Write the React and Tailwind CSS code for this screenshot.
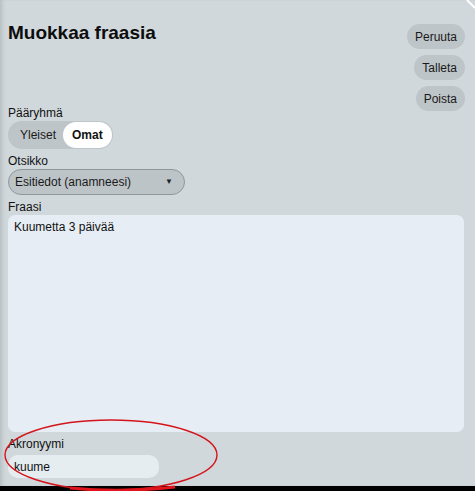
import React from 'react';

function PillButton({ children }) {
  return (
    <button className="h-[25px] px-2 rounded-full bg-[#bec5c9] text-[12px] leading-[14px] text-[#1a1a1a]">
      {children}
    </button>
  );
}

function Label({ children, className = '' }) {
  return <div className={`text-[12px] leading-[14px] text-[#111] ${className}`}>{children}</div>;
}

export default function App() {
  return (
    <div
      className="relative w-[475px] h-[491px] flex flex-col overflow-hidden bg-[#d0d8dc]"
      style={{ fontFamily: '"Liberation Sans", Arial, sans-serif' }}
    >
      <div className="flex-1 flex flex-col pt-[22px] pl-[8px] pr-[10px] shadow-[inset_4px_0_4px_-2px_rgba(0,0,0,0.13)]">
        {/* header */}
        <div className="flex justify-between items-start h-[84px]">
          <h1 className="text-[19px] leading-[22px] font-bold text-[#0d0d0d]">Muokkaa fraasia</h1>
          <div className="flex flex-col items-end gap-[6px] pt-[2px]">
            <PillButton>Peruuta</PillButton>
            <PillButton>Talleta</PillButton>
            <PillButton>Poista</PillButton>
          </div>
        </div>

        <Label>Pääryhmä</Label>
        <div className="mt-[1px] self-start flex items-center h-[28px] rounded-full bg-[#bec5c9] p-[1px]">
          <span className="pl-[11px] pr-[7px] text-[12px] leading-[14px] text-[#1a1a1a]">Yleiset</span>
          <span className="h-full flex items-center px-[9px] rounded-full bg-white text-[12px] leading-[14px] font-bold text-[#111]">
            Omat
          </span>
        </div>

        <Label className="mt-[5px]">Otsikko</Label>
        <div className="mt-[1px] w-[177px] h-[26px] flex items-center justify-between rounded-full border border-[#8f979b] bg-[#bdc4c8] pl-[6px] pr-[11px]">
          <span className="text-[12px] leading-[14px] text-[#1a1a1a]">Esitiedot (anamneesi)</span>
          <span className="text-[8px] leading-none text-[#222]">▼</span>
        </div>

        <Label className="mt-[5px]">Fraasi</Label>
        <textarea
          readOnly
          defaultValue="Kuumetta 3 päivää"
          className="mt-[1px] w-[456px] h-[217px] resize-none rounded-[7px] bg-[#e6edf4] pt-[5px] px-[6px] text-[12px] leading-[14px] text-[#111] outline-none"
        />

        <Label className="mt-[5px]">Akronyymi</Label>
        <input
          readOnly
          value="kuume"
          className="mt-[4px] w-[151px] h-[23px] rounded-[10px] bg-[#e6edf1] px-[6px] text-[12px] leading-[14px] text-[#111] outline-none"
        />
      </div>
      <div className="h-[5px] bg-black" />

      {/* corner mark */}
      <svg className="absolute top-0 right-0" width="10" height="10" viewBox="0 0 10 10">
        <path d="M2 0 L10 8" stroke="#ffffff" strokeWidth="2" />
      </svg>

      {/* red annotation ellipse */}
      <svg className="absolute left-0 top-0 pointer-events-none" width="475" height="491" viewBox="0 0 475 491">
        <ellipse cx="111" cy="455" rx="106" ry="35" fill="none" stroke="#d4141a" strokeWidth="1.4" />
        <path d="M70 488 Q 120 493 175 487" fill="none" stroke="#e0141a" strokeWidth="3" />
      </svg>
    </div>
  );
}
